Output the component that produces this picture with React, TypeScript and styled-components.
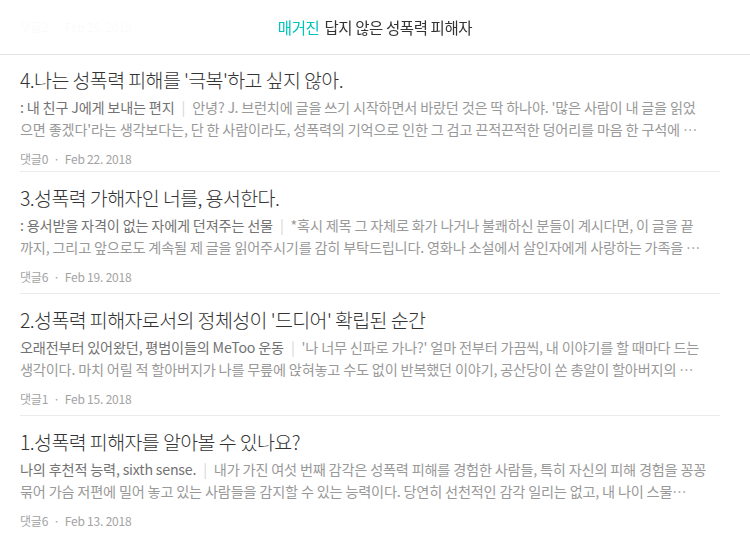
import React from "react";
import styled, { createGlobalStyle } from "styled-components";

const GlobalStyle = createGlobalStyle`
  * { box-sizing: border-box; }
  html, body {
    margin: 0;
    padding: 0;
    background: #fff;
    font-family: "Noto Sans CJK KR", "Noto Sans", sans-serif;
    -webkit-font-smoothing: antialiased;
  }
`;

type Post = {
  title: string;
  subtitle: string;
  lines: [string, string];
  comments: number;
  date: string;
};

const posts: Post[] = [
  {
    title: "4.나는 성폭력 피해를 '극복'하고 싶지 않아.",
    subtitle: ": 내 친구 J에게 보내는 편지",
    lines: [
      "안녕? J. 브런치에 글을 쓰기 시작하면서 바랐던 것은 딱 하나야. '많은 사람이 내 글을 읽었",
      "으면 좋겠다'라는 생각보다는, 단 한 사람이라도, 성폭력의 기억으로 인한 그 검고 끈적끈적한 덩어리를 마음 한 구석에 …",
    ],
    comments: 0,
    date: "Feb 22. 2018",
  },
  {
    title: "3.성폭력 가해자인 너를, 용서한다.",
    subtitle: ": 용서받을 자격이 없는 자에게 던져주는 선물",
    lines: [
      "*혹시 제목 그 자체로 화가 나거나 불쾌하신 분들이 계시다면, 이 글을 끝",
      "까지, 그리고 앞으로도 계속될 제 글을 읽어주시기를 감히 부탁드립니다. 영화나 소설에서 살인자에게 사랑하는 가족을 …",
    ],
    comments: 6,
    date: "Feb 19. 2018",
  },
  {
    title: "2.성폭력 피해자로서의 정체성이 '드디어' 확립된 순간",
    subtitle: "오래전부터 있어왔던, 평범이들의 MeToo 운동",
    lines: [
      "'나 너무 신파로 가나?' 얼마 전부터 가끔씩, 내 이야기를 할 때마다 드는",
      "생각이다. 마치 어릴 적 할아버지가 나를 무릎에 앉혀놓고 수도 없이 반복했던 이야기, 공산당이 쏜 총알이 할아버지의 …",
    ],
    comments: 1,
    date: "Feb 15. 2018",
  },
  {
    title: "1.성폭력 피해자를 알아볼 수 있나요?",
    subtitle: "나의 후천적 능력, sixth sense.",
    lines: [
      "내가 가진 여섯 번째 감각은 성폭력 피해를 경험한 사람들, 특히 자신의 피해 경험을 꽁꽁",
      "묶어 가슴 저편에 밀어 놓고 있는 사람들을 감지할 수 있는 능력이다. 당연히 선천적인 감각 일리는 없고,  내 나이 스물…",
    ],
    comments: 6,
    date: "Feb 13. 2018",
  },
];

/* Translucent bar pinned over the scrolling list */
const Header = styled.header`
  position: fixed;
  top: 0;
  left: 0;
  right: 0;
  height: 55px;
  display: flex;
  align-items: center;
  justify-content: center;
  background: rgba(255, 255, 255, 0.95);
  border-bottom: 1px solid #e3e3e3;
  font-size: 15.5px;
  color: #333;
  letter-spacing: -0.4px;
  z-index: 10;
`;

const MagazineLabel = styled.span`
  color: #00c3bd;
  margin-right: 5px;
`;

const Feed = styled.main`
  padding: 18px 30px 0 20px;
`;

/* tail of the previous entry, mostly hidden under the header */
const PostTail = styled.div`
  padding-bottom: 18px;
`;

const Article = styled.article`
  padding: 12px 0 7px;
  border-bottom: 1px solid #ebebeb;

  &:first-of-type {
    padding-bottom: 3px;
  }

  &:last-child {
    border-bottom: none;
  }
`;

const Title = styled.h2`
  margin: 0;
  font-size: 19.5px;
  line-height: 28px;
  font-weight: 300;
  color: #333;
  letter-spacing: -0.6px;
  white-space: nowrap;
`;

const Excerpt = styled.div`
  margin-top: 2px;
  font-size: 14.2px;
  line-height: 22px;
  font-weight: 400;
  color: #999;
  letter-spacing: -0.2px;
`;

const ExcerptLine = styled.div`
  white-space: nowrap;
  overflow: hidden;
`;

const Subtitle = styled.span`
  color: #737373;
`;

const Divider = styled.span`
  color: #d4d4d4;
  margin: 0 7px;
`;

const Meta = styled.div<{ $flush?: boolean }>`
  margin-top: ${(p) => (p.$flush ? 0 : 10)}px;
  font-size: 12px;
  line-height: 18px;
  color: #a3a3a3;
  letter-spacing: -0.2px;
`;

const Dot = styled.span`
  margin: 0 5px;
`;

function PostMeta({ comments, date }: { comments: number; date: string }) {
  return (
    <>
      댓글{comments}
      <Dot>·</Dot>
      {date}
    </>
  );
}

export default function App() {
  return (
    <>
      <GlobalStyle />
      <Header>
        <MagazineLabel>매거진</MagazineLabel>답지 않은 성폭력 피해자
      </Header>
      <Feed>
        <PostTail>
          <Meta $flush>
            <PostMeta comments={2} date="Feb 26. 2018" />
          </Meta>
        </PostTail>
        {posts.map((p) => (
          <Article key={p.title}>
            <Title>{p.title}</Title>
            <Excerpt>
              <ExcerptLine>
                <Subtitle>{p.subtitle}</Subtitle>
                <Divider>|</Divider>
                {p.lines[0]}
              </ExcerptLine>
              <ExcerptLine>{p.lines[1]}</ExcerptLine>
            </Excerpt>
            <Meta>
              <PostMeta comments={p.comments} date={p.date} />
            </Meta>
          </Article>
        ))}
      </Feed>
    </>
  );
}
